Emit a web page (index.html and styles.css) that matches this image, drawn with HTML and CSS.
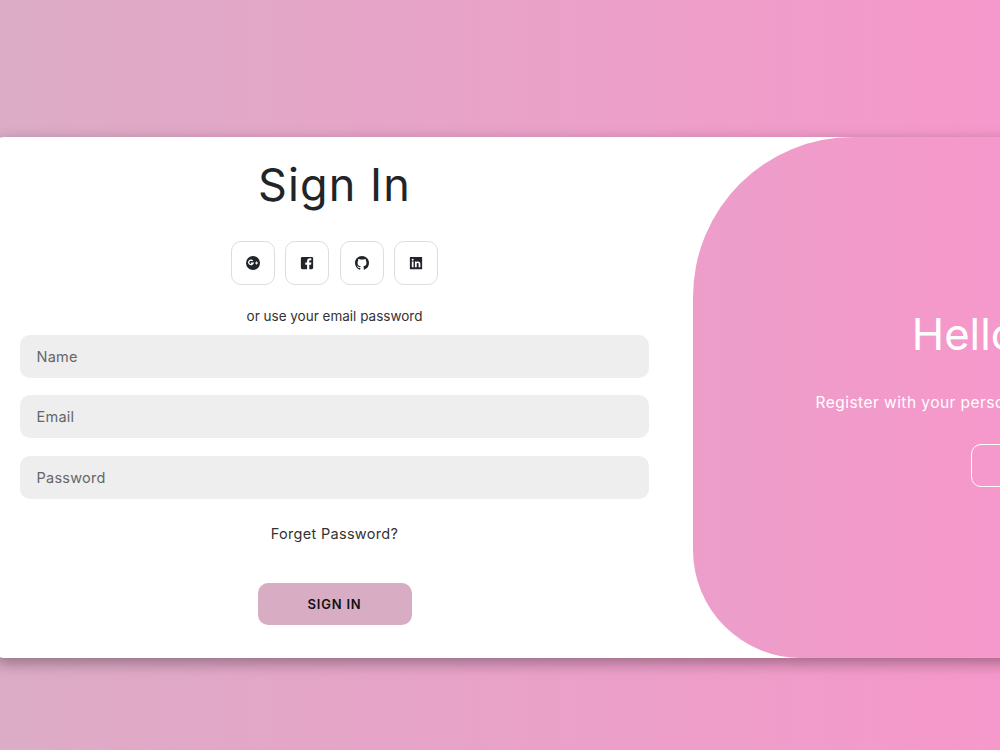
FILE: index.html
```html
<!DOCTYPE html>
<html lang="en">
<head>
<meta charset="utf-8">
<title>Sign In</title>
<link rel="stylesheet" href="styles.css">
</head>
<body>
<main class="card">
  <form class="form">
    <h1 class="title">Sign In</h1>
    <div class="socials">
      <a class="social" href="#" aria-label="Google Plus">
        <svg class="icon" viewBox="0 0 16 16"><circle cx="8" cy="8" r="8" fill="currentColor"/><path d="M7.700 5.600A2.600 2.600 0 1 0 8.100 8.300H5.600" fill="none" stroke="#fff" stroke-width="1.500"/><path d="M10.400 8h3.400M12.100 6.300v3.400" fill="none" stroke="#fff" stroke-width="1.100"/></svg>
      </a>
      <a class="social" href="#" aria-label="Facebook">
        <svg class="icon" viewBox="0 0 16 16"><path fill="currentColor" fill-rule="evenodd" d="M2.600 1h10.800A1.600 1.600 0 0 1 15 2.600v10.800a1.600 1.600 0 0 1-1.600 1.600h-2.800V9.900h2l.4-2.400h-2.400V6c0-.7.3-1.200 1.300-1.200H13V2.800c-.5-.1-1.100-.2-1.800-.2-1.900 0-3.100 1.200-3.100 3.200v1.700H6v2.400h2.100V15H2.600A1.600 1.600 0 0 1 1 13.400V2.600A1.600 1.600 0 0 1 2.600 1z"/></svg>
      </a>
      <a class="social" href="#" aria-label="GitHub">
        <svg class="icon" viewBox="0 0 16 16"><path fill="currentColor" d="M8 0C3.58 0 0 3.58 0 8c0 3.54 2.29 6.53 5.47 7.59.4.07.55-.17.55-.38 0-.19-.01-.82-.01-1.49-2.01.37-2.53-.49-2.69-.94-.09-.23-.48-.94-.82-1.13-.28-.15-.68-.52-.01-.53.63-.01 1.08.58 1.23.82.72 1.21 1.87.87 2.33.66.07-.52.28-.87.51-1.07-1.78-.2-3.64-.89-3.64-3.95 0-.87.31-1.59.82-2.15-.08-.2-.36-1.02.08-2.12 0 0 .67-.21 2.2.82.64-.18 1.32-.27 2-.27.68 0 1.36.09 2 .27 1.53-1.04 2.2-.82 2.2-.82.44 1.1.16 1.92.08 2.12.51.56.82 1.27.82 2.15 0 3.07-1.87 3.75-3.65 3.95.29.25.54.73.54 1.48 0 1.07-.01 1.93-.01 2.2 0 .21.15.46.55.38A8.013 8.013 0 0 0 16 8c0-4.42-3.58-8-8-8z"/></svg>
      </a>
      <a class="social" href="#" aria-label="LinkedIn">
        <svg class="icon" viewBox="0 0 16 16"><path fill="currentColor" fill-rule="evenodd" d="M1 1h14v14H1zM3.200 6.400v6.400h2V6.400zM4.200 3.200a1.150 1.150 0 1 0 0 2.300 1.150 1.150 0 0 0 0-2.300zM6.800 6.400v6.400h2V9.600c0-.9.4-1.500 1.200-1.500s1 .6 1 1.500v3.200h2V9.200c0-1.900-1-3-2.600-3-1 0-1.600.5-1.700 1V6.400z"/></svg>
      </a>
    </div>
    <p class="hint">or use your email password</p>
    <input class="field" type="text" placeholder="Name">
    <input class="field" type="email" placeholder="Email">
    <input class="field" type="password" placeholder="Password">
    <a class="forgot" href="#">Forget Password?</a>
    <button class="submit" type="button">SIGN IN</button>
  </form>
  <aside class="panel">
    <h2 class="panel-title">Hello, Friend!</h2>
    <p class="panel-text">Register with your personal details to use all of site features</p>
    <button class="ghost" type="button">SIGN UP</button>
  </aside>
</main>
</body>
</html>
```

FILE: styles.css
```css
* { box-sizing: border-box; }

html, body { height: 100%; }

body {
  margin: 0;
  height: 750px;
  padding-top: 137px;
  overflow: hidden;
  display: flex;
  align-items: flex-start;
  background: linear-gradient(to right, #dcacc6, #f698cb);
  font-family: Inter, "Liberation Sans", sans-serif;
  color: #212529;
}

.card {
  flex: none;
  display: flex;
  width: 1440px;
  height: 521px;
  margin-left: -6px;
  background: #fff;
  border-radius: 10px;
  box-shadow: 0 5px 15px rgba(0, 0, 0, 0.35);
}

.form {
  flex: none;
  width: 681px;
  padding: 0 26px;
  display: flex;
  flex-direction: column;
  align-items: center;
}

.title {
  margin: 19px 0 0;
  height: 57px;
  font-size: 45px;
  line-height: 57px;
  font-weight: 400;
  letter-spacing: 1.1px;
}

.socials {
  display: flex;
  gap: 10.5px;
  margin-top: 28px;
}

.social {
  width: 44px;
  height: 44px;
  display: flex;
  align-items: center;
  justify-content: center;
  border: 1px solid #ddd;
  border-radius: 10px;
  color: #212529;
}

.icon { width: 14px; height: 14px; }

.hint {
  margin: 21px 0 8.7px;
  font-size: 13.5px;
  line-height: 20px;
  white-space: nowrap;
  color: #333;
}

.field {
  width: 100%;
  height: 43px;
  flex: none;
  margin-bottom: 17.5px;
  padding: 0 16.5px;
  border: 0;
  border-radius: 10px;
  background: #eee;
  font: 14.5px Inter, "Liberation Sans", sans-serif;
  letter-spacing: 0.25px;
}

.field::placeholder { color: #666; opacity: 1; }

.forgot {
  margin-top: 7.3px;
  font-size: 14.5px;
  line-height: 22px;
  color: #333;
  letter-spacing: 0.3px;
  text-decoration: none;
}

.submit {
  width: 154px;
  height: 42px;
  margin-top: 38px;
  border: 0;
  border-radius: 10px;
  background: #d8adc4;
  color: #111;
  font: 600 13px Inter, "Liberation Sans", sans-serif;
  letter-spacing: 0.8px;
}

.panel {
  flex: none;
  width: 710px;
  margin-left: 18px;
  border-radius: 160px 0 0 108px;
  background: linear-gradient(to right, #ec9ec9, #f698cb 307px);
  color: #fff;
  display: flex;
  flex-direction: column;
  align-items: center;
  padding-top: 171px;
}

.panel-title {
  margin: 0;
  font-size: 43.6px;
  line-height: 54px;
  font-weight: 400;
  white-space: nowrap;
}

.panel-text {
  margin: 29px 0 0;
  font-size: 15.5px;
  line-height: 24px;
  letter-spacing: 0.45px;
  white-space: nowrap;
}

.ghost {
  width: 154px;
  height: 43px;
  margin-top: 29px;
  border: 1px solid #fff;
  border-radius: 10px;
  background: transparent;
  color: #fff;
  font: 600 13px Inter, "Liberation Sans", sans-serif;
}
```
